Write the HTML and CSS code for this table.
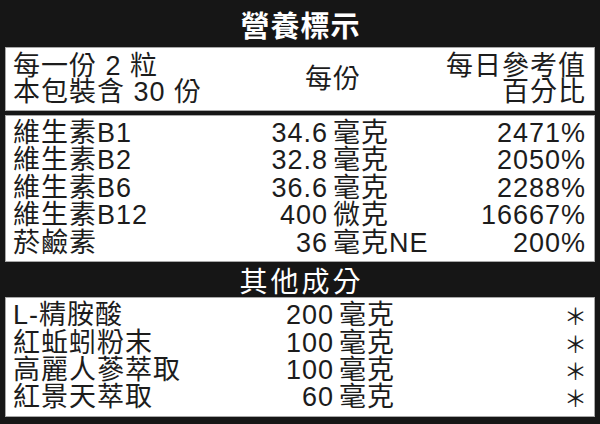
FILE: index.html
```html
<!DOCTYPE html>
<html lang="zh-Hant">
<head>
<meta charset="utf-8">
<link rel="stylesheet" href="styles.css">
</head>
<body>
<div class="label">
  <div class="title">營養標示</div>
  <div class="panel head">
    <div class="serving">
      <div>每一份 2 粒</div>
      <div>本包裝含 30 份</div>
    </div>
    <div class="per">每份</div>
    <div class="dv">
      <div>每日參考值</div>
      <div>百分比</div>
    </div>
  </div>
  <div class="panel rows vit">
    <div class="name">維生素B1</div><div class="num">34.6</div><div class="unit">毫克</div><div class="pct">2471%</div>
    <div class="name">維生素B2</div><div class="num">32.8</div><div class="unit">毫克</div><div class="pct">2050%</div>
    <div class="name">維生素B6</div><div class="num">36.6</div><div class="unit">毫克</div><div class="pct">2288%</div>
    <div class="name">維生素B12</div><div class="num">400</div><div class="unit">微克</div><div class="pct">16667%</div>
    <div class="name">菸鹼素</div><div class="num">36</div><div class="unit">毫克NE</div><div class="pct">200%</div>
  </div>
  <div class="band">其他成分</div>
  <div class="panel rows other">
    <div class="name">L-精胺酸</div><div class="num">200</div><div class="unit">毫克</div><div class="pct star">＊</div>
    <div class="name">紅蚯蚓粉末</div><div class="num">100</div><div class="unit">毫克</div><div class="pct star">＊</div>
    <div class="name">高麗人蔘萃取</div><div class="num">100</div><div class="unit">毫克</div><div class="pct star">＊</div>
    <div class="name">紅景天萃取</div><div class="num">60</div><div class="unit">毫克</div><div class="pct star">＊</div>
  </div>
</div>
</body>
</html>
```
FILE: styles.css
```css
html, body {
  margin: 0;
  padding: 0;
  background: #161616;
}
body {
  width: 600px;
  height: 424px;
  overflow: hidden;
  font-family: "Liberation Sans", "Noto Sans CJK TC", sans-serif;
  color: #1c1c1c;
}
.label {
  padding: 0 5px;
}
.title {
  height: 47px;
  display: flex;
  align-items: center;
  justify-content: center;
  color: #fff;
  font-weight: 700;
  font-size: 29px;
  letter-spacing: 1px;
  padding-left: 1px;
}
.panel {
  background: #fff;
  border: 1px solid #a8a8a8;
  box-sizing: border-box;
  padding: 0 9px 0 7px;
  font-size: 27px;
  letter-spacing: 1px;
}
.head {
  height: 64px;
  margin-bottom: 4px;
  display: grid;
  grid-template-columns: 265px 110px 1fr;
  align-items: center;
  line-height: 26px;
}
.per {
  text-align: center;
}
.dv {
  text-align: right;
  margin-right: -1px;
}
.rows {
  display: grid;
  align-content: center;
  line-height: 27.4px;
}
.vit {
  height: 147px;
  grid-template-columns: 200px 115px auto 1fr;
}
.other {
  height: 120px;
  grid-template-columns: 200px 121px auto 1fr;
}
.num {
  text-align: right;
}
.unit {
  padding-left: 5px;
}
.pct {
  text-align: right;
  margin-right: -1px;
}
.star {
  font-family: "Noto Sans CJK TC", sans-serif;
  font-size: 23px;
  line-height: 27.4px;
  margin-right: -3px;
}
.band {
  height: 35px;
  display: flex;
  align-items: center;
  justify-content: center;
  color: #fff;
  font-size: 28px;
  letter-spacing: 3px;
  padding-left: 3px;
}
```
